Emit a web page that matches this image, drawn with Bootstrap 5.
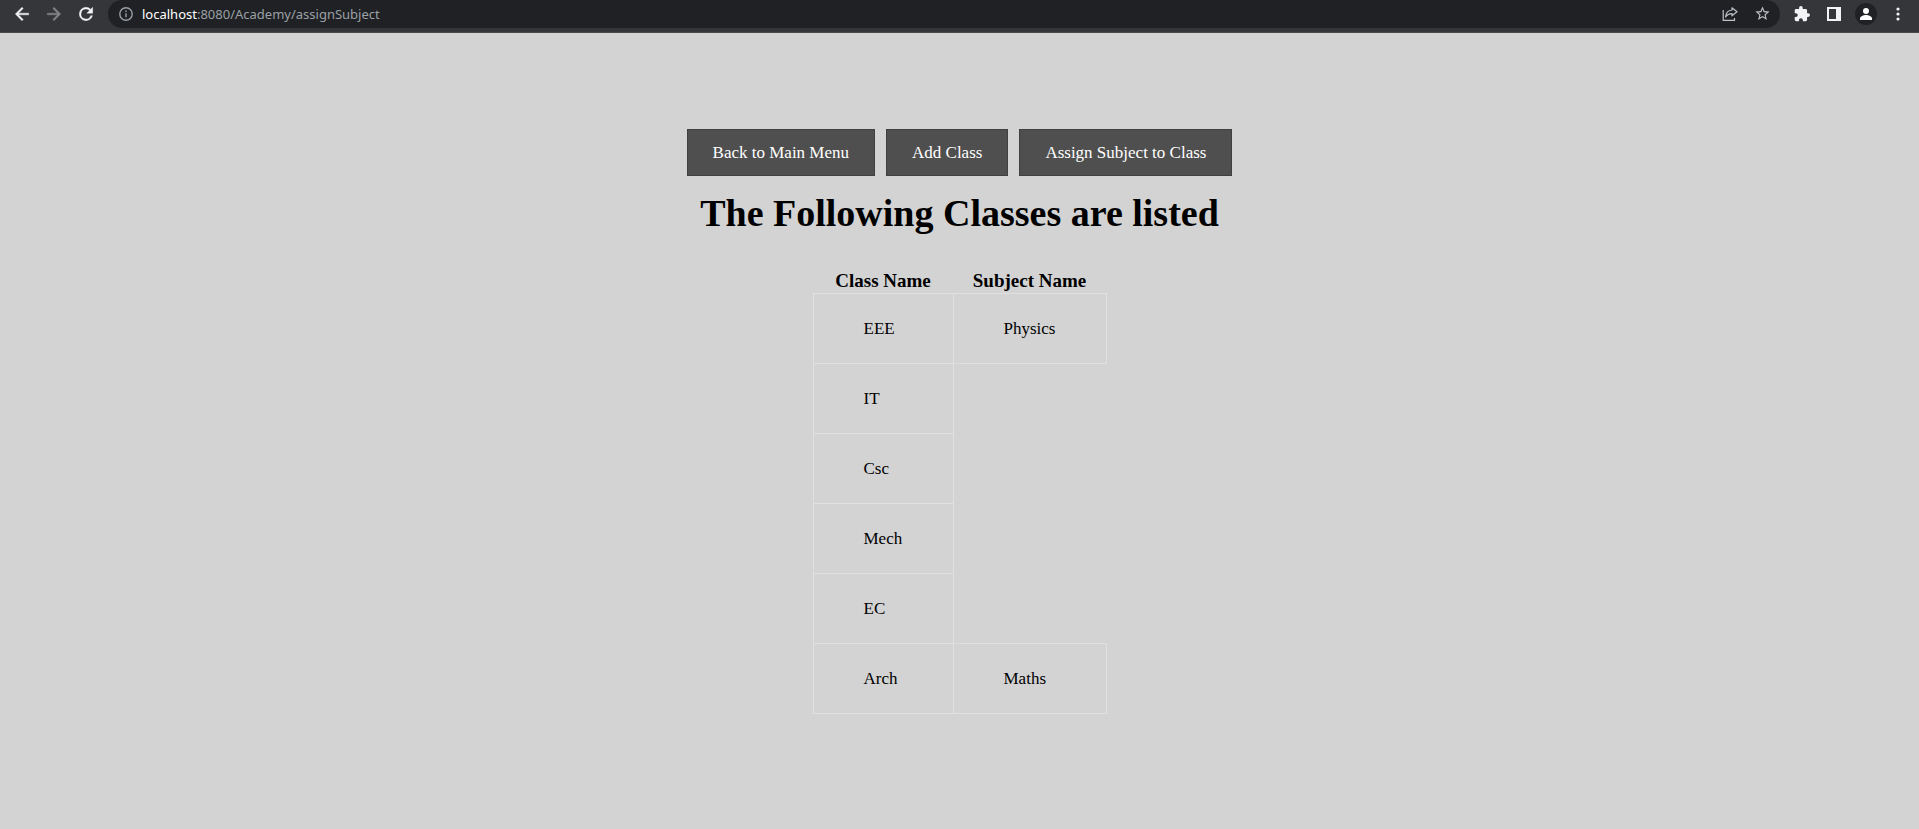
<!DOCTYPE html>
<html lang="en">
<head>
<meta charset="utf-8">
<meta name="viewport" content="width=device-width, initial-scale=1">
<title>Academy - Assign Subject</title>
<link rel="stylesheet" href="https://cdn.jsdelivr.net/npm/bootstrap@5.3.0/dist/css/bootstrap.min.css">
<style>
  body { background: #d3d3d3; color: #000; font-family: Georgia, "Liberation Serif", serif; font-size: 17px; line-height: 20px; }
  .toolbar { background: #35363a; height: 33px; padding: 0 9px 5px 10px; gap: 10px; border-bottom: 1px solid #4a4b4e; }
  .tool { width: 24px; height: 24px; color: #f1f3f4; }
  .tool svg, .address svg { display: block; flex: none; }
  .tool:disabled { color: #85868a; opacity: 1; }
  .address { background: #202124; height: 28px; border-radius: 14px; padding: 0 6px 0 11px; color: #9aa0a6; }
  .address .tool { color: #bdc1c6; }
  .url { font: 13px/18px "Noto Sans", "Open Sans", sans-serif; margin-left: 9px; outline: 0; }
  .url span { color: #fff; }
  .content { padding-top: 96px; }
  .actions { gap: 11px; }
  .action { background: #4f4f4f; border: 1px solid #404040; border-radius: 0; color: #fff; font-size: 17px; line-height: 20px; padding: 13px 25px 12px; }
  .action:hover { background: #606060; color: #fff; }
  h1 { font-size: 38px; line-height: 40px; font-weight: 700; margin: 17px 0 38px; }
  .classes { border-collapse: collapse; }
  .classes th { font-size: 19px; padding: 0 0 2px; text-align: center; }
  .classes td { border: 1px solid #e0e0e0; height: 70px; padding: 0 0 0 50px; }
  .classes td:empty { border: 0; }
  .col-class { width: 140px; }
  .col-subject { width: 153px; }
</style>
<script src="https://cdn.jsdelivr.net/npm/bootstrap@5.3.0/dist/js/bootstrap.bundle.min.js"></script>
</head>
<body>
<header class="toolbar d-flex align-items-center">
  <div class="d-flex gap-2">
    <button class="tool btn p-0 border-0 d-flex align-items-center justify-content-center" aria-label="Back"><svg width="20" height="20" viewBox="0 0 24 24" fill="currentColor"><path d="M20 11H7.83l5.59-5.59L12 4l-8 8 8 8 1.41-1.41L7.83 13H20z" stroke="currentColor" stroke-width=".5"/></svg></button>
    <button class="tool btn p-0 border-0 d-flex align-items-center justify-content-center" aria-label="Forward" disabled><svg width="20" height="20" viewBox="0 0 24 24" fill="currentColor"><path d="M12 4l-1.41 1.41L16.17 11H4v2h12.17l-5.58 5.59L12 20l8-8z" stroke="currentColor" stroke-width=".5"/></svg></button>
    <button class="tool btn p-0 border-0 d-flex align-items-center justify-content-center" aria-label="Reload"><svg width="20" height="20" viewBox="0 0 24 24" fill="currentColor"><path d="M17.65 6.35A7.96 7.96 0 0 0 12 4a8 8 0 1 0 7.73 10h-2.08A6 6 0 1 1 12 6c1.66 0 3.14.69 4.22 1.78L13 11h7V4z" stroke="currentColor" stroke-width=".5"/></svg></button>
  </div>
  <div class="address d-flex align-items-center flex-grow-1">
    <svg width="14" height="14" viewBox="0 0 14 14" fill="none" stroke="currentColor" stroke-width="1.4"><circle cx="7" cy="7" r="6.2"/><path d="M7 6.2v4.1M7 3.5v1.5"/></svg>
    <div class="url flex-grow-1" role="textbox" contenteditable="true" spellcheck="false" aria-label="Address"><span>localhost</span>:8080/Academy/assignSubject</div>
    <button class="tool btn p-0 border-0 d-flex align-items-center justify-content-center me-2" aria-label="Share"><svg width="16" height="16" viewBox="0 0 16 16" fill="none" stroke="currentColor" stroke-width="1.2" stroke-linejoin="round"><path d="M1.2 4v10.4h11.3V12M10 1.8l5 4-5 4V7.6C7.2 7.6 5.2 8.5 3.6 11 4 7 6 4.3 10 4z"/></svg></button>
    <button class="tool btn p-0 border-0 d-flex align-items-center justify-content-center" aria-label="Bookmark"><svg width="17" height="17" viewBox="0 0 24 24" fill="currentColor"><path d="M22 9.24l-7.19-.62L12 2 9.19 8.63 2 9.24l5.46 4.73L5.82 21 12 17.27 18.18 21l-1.63-7.03zM12 15.4l-3.76 2.27 1-4.28-3.32-2.88 4.38-.38L12 6.1l1.71 4.04 4.38.38-3.32 2.88 1 4.28z"/></svg></button>
  </div>
  <div class="d-flex gap-2">
    <button class="tool btn p-0 border-0 d-flex align-items-center justify-content-center" aria-label="Extensions"><svg width="16" height="16" viewBox="1 1 22 22" fill="currentColor"><path d="M20.5 11H19V7a2 2 0 0 0-2-2h-4V3.500a2.500 2.500 0 0 0-5 0V5H4a2 2 0 0 0-2 2v3.800h1.500a2.700 2.700 0 0 1 0 5.400H2V20a2 2 0 0 0 2 2h3.800v-1.500a2.700 2.700 0 0 1 5.400 0V22H17a2 2 0 0 0 2-2v-4h1.500a2.500 2.500 0 0 0 0-5z"/></svg></button>
    <button class="tool btn p-0 border-0 d-flex align-items-center justify-content-center" aria-label="Side panel"><svg width="14" height="14" viewBox="0 0 14 14" fill="currentColor" fill-rule="evenodd"><path d="M0 0h14v14H0zM2 2v10h7V2z"/></svg></button>
    <button class="tool btn p-0 border-0 d-flex align-items-center justify-content-center" aria-label="Profile"><svg width="22" height="22" viewBox="0 0 22 22"><circle cx="11" cy="11" r="11" fill="#202124"/><circle cx="11" cy="8" r="3" fill="#fff"/><path d="M5 17v-1.500C5 13.300 8.500 12 11 12s6 1.300 6 3.500V17z" fill="#fff"/></svg></button>
    <button class="tool btn p-0 border-0 d-flex align-items-center justify-content-center" aria-label="Menu"><svg width="4" height="14" viewBox="0 0 4 14" fill="currentColor"><circle cx="2" cy="2" r="1.600"/><circle cx="2" cy="7" r="1.600"/><circle cx="2" cy="12" r="1.600"/></svg></button>
  </div>
</header>
<main class="content d-flex flex-column align-items-center">
  <div class="actions d-flex flex-wrap justify-content-center">
    <button class="action btn">Back to Main Menu</button>
    <button class="action btn">Add Class</button>
    <button class="action btn">Assign Subject to Class</button>
  </div>
  <h1 class="text-center">The Following Classes are listed</h1>
  <table class="classes">
    <colgroup><col class="col-class"><col class="col-subject"></colgroup>
    <thead><tr><th scope="col">Class Name</th><th scope="col">Subject Name</th></tr></thead>
    <tbody>
      <tr><td>EEE</td><td>Physics</td></tr>
      <tr><td>IT</td><td></td></tr>
      <tr><td>Csc</td><td></td></tr>
      <tr><td>Mech</td><td></td></tr>
      <tr><td>EC</td><td></td></tr>
      <tr><td>Arch</td><td>Maths</td></tr>
    </tbody>
  </table>
</main>
</body>
</html>
